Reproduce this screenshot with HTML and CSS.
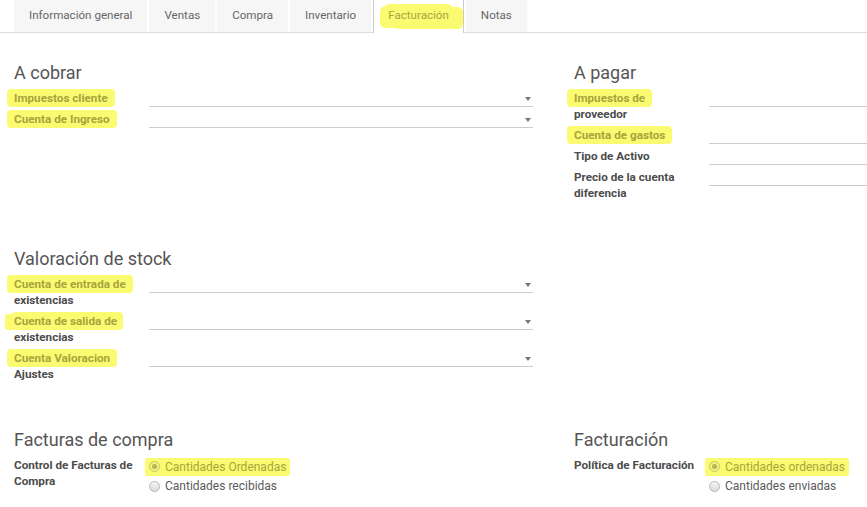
FILE: index.html
```html
<!DOCTYPE html>
<html lang="es">
<head>
<meta charset="utf-8">
<title>Producto - Facturación</title>
<link rel="stylesheet" href="styles.css">
</head>
<body>
<div class="tabs">
  <div class="tab">Información general</div>
  <div class="tab">Ventas</div>
  <div class="tab">Compra</div>
  <div class="tab">Inventario</div>
  <div class="tab active"><span class="hl hl-tab">Facturación</span></div>
  <div class="tab">Notas</div>
</div>

<div class="sheet">
  <div class="section">
    <div class="group">
      <h2>A cobrar</h2>
      <div class="row">
        <div class="label"><span class="hl">Impuestos cliente</span></div>
        <div class="field"><span class="caret"></span></div>
      </div>
      <div class="row">
        <div class="label"><span class="hl">Cuenta de Ingreso</span></div>
        <div class="field"><span class="caret"></span></div>
      </div>
    </div>
    <div class="group">
      <h2>A pagar</h2>
      <div class="row">
        <div class="label"><span class="hl">Impuestos de</span> proveedor</div>
        <div class="field"></div>
      </div>
      <div class="row">
        <div class="label"><span class="hl">Cuenta de gastos</span></div>
        <div class="field"></div>
      </div>
      <div class="row">
        <div class="label">Tipo de Activo</div>
        <div class="field"></div>
      </div>
      <div class="row">
        <div class="label">Precio de la cuenta diferencia</div>
        <div class="field"></div>
      </div>
    </div>
  </div>

  <div class="section">
    <div class="group">
      <h2>Valoración de stock</h2>
      <div class="row">
        <div class="label"><span class="hl">Cuenta de entrada de</span> existencias</div>
        <div class="field"><span class="caret"></span></div>
      </div>
      <div class="row">
        <div class="label"><span class="hl hl-left">Cuenta de salida de</span> existencias</div>
        <div class="field"><span class="caret"></span></div>
      </div>
      <div class="row">
        <div class="label"><span class="hl">Cuenta Valoracion</span> Ajustes</div>
        <div class="field"><span class="caret"></span></div>
      </div>
    </div>
    <div class="group"></div>
  </div>

  <div class="section">
    <div class="group">
      <h2>Facturas de compra</h2>
      <div class="row">
        <div class="label">Control de Facturas de Compra</div>
        <div class="radios">
          <div class="option"><span class="opt-inner hl"><span class="radio checked"></span>Cantidades Ordenadas</span></div>
          <div class="option"><span class="opt-inner"><span class="radio"></span>Cantidades recibidas</span></div>
        </div>
      </div>
    </div>
    <div class="group">
      <h2>Facturación</h2>
      <div class="row">
        <div class="label">Política de Facturación</div>
        <div class="radios">
          <div class="option"><span class="opt-inner hl"><span class="radio checked"></span>Cantidades ordenadas</span></div>
          <div class="option"><span class="opt-inner"><span class="radio"></span>Cantidades enviadas</span></div>
        </div>
      </div>
    </div>
  </div>
</div>
</body>
</html>
```

FILE: styles.css
```css
html, body {
  margin: 0;
  background: #fff;
}
body {
  font-family: Roboto, "Noto Sans", "Liberation Sans", sans-serif;
  color: #4c4c4c;
  overflow: hidden;
}

/* Tabs */
.tabs {
  display: flex;
  gap: 2px;
  padding-left: 14px;
  height: 32px;
  border-bottom: 1px solid #ddd;
}
.tab {
  box-sizing: border-box;
  height: 32px;
  padding: 6px 15px 8px;
  line-height: 18px;
  font-size: 11.6px;
  color: #666;
  background: #f6f6f6;
  white-space: nowrap;
}
.tab.active {
  background: #fff;
  height: 33px;
  margin-bottom: -1px;
  border-left: 1px solid #ccc;
  border-right: 1px solid #ccc;
  padding: 6px 14px 8px;
}

/* Highlighter marks */
.hl {
  background: #fbfb72;
  color: #a5a53c;
  box-shadow: 0 0 0 2px #fbfb72, -5px 0 0 2px #fbfb72, 5px 0 0 2px #fbfb72;
  border-radius: 2px;
}
.hl-left {
  box-shadow: 0 0 0 2px #fbfb72, -8px 1px 0 1px #fbfb72, 4px 0 0 2px #fbfb72;
}
.hl-tab {
  box-shadow: 0 0 0 4px #fbfb72, -4px 2px 0 4px #fbfb72, 10px 3px 0 4px #fbfb72;
}

/* Sheet */
.sheet {
  padding: 29px 0 0 14px;
}
.section {
  display: grid;
  grid-template-columns: 519px 293px;
  column-gap: 41px;
  align-items: start;
}
.section + .section {
  margin-top: 42px;
}
h2 {
  margin: 0 0 6px;
  font-size: 18px;
  line-height: 22px;
  font-weight: 400;
  color: #555;
}
.row {
  display: grid;
  grid-template-columns: 135px 1fr;
  align-items: start;
}
.label {
  font-size: 11.7px;
  font-weight: 700;
  line-height: 16px;
  padding: 0 8px 5px 0;
  color: #4c4c4c;
}
.field {
  height: 16px;
  border-bottom: 1px solid #ccc;
  display: flex;
  justify-content: flex-end;
  align-items: center;
}
.caret {
  width: 0;
  height: 0;
  border-left: 3px solid transparent;
  border-right: 3px solid transparent;
  border-top: 4px solid #777;
  margin: 2px 2px 0 0;
}

/* Radios */
.radios {
  display: flex;
  flex-direction: column;
  align-items: flex-start;
}
.option {
  line-height: 16px;
  height: 16px;
  margin-bottom: 5px;
  font-size: 12px;
  color: #5a5a5a;
}
.opt-inner {
  display: inline-flex;
  align-items: center;
  gap: 5px;
}
.opt-inner.hl {
  box-shadow: 0 0 0 1px #fbfb72, -3px 0 0 1px #fbfb72, 3px 0 0 1px #fbfb72;
}
.radio {
  box-sizing: border-box;
  width: 11px;
  height: 11px;
  border-radius: 50%;
  border: 1px solid #b5b5b5;
  background: linear-gradient(#f4f4f4, #dcdcdc);
  display: inline-flex;
  align-items: center;
  justify-content: center;
}
.radio.checked::after {
  content: "";
  width: 5px;
  height: 5px;
  border-radius: 50%;
  background: #8a8a8a;
}
.hl .radio {
  border-color: #c8c860;
  background: #f0f08a;
}
.hl .radio.checked::after {
  background: #b5b548;
}
```
